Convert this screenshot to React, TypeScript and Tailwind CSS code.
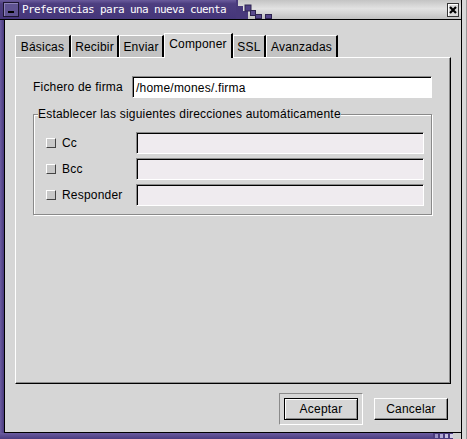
import React from "react";

const ui = "font-['Liberation_Sans',Arial,sans-serif] text-[12px] leading-[14px] tracking-[0.2px] text-black";

function Tab({ label, w, active }: { label: string; w: string; active?: boolean }) {
  if (active) {
    return (
      <div
        className={`${w} h-[25px] -mb-px relative z-10 bg-[#d6d6d6] border-l border-t border-white border-r-2 border-r-black flex justify-center pt-[3px]`}
      >
        {label}
      </div>
    );
  }
  return (
    <div
      className={`${w} h-[22px] bg-[#c3c3c3] border-l border-t border-white border-r-2 border-r-black flex justify-center pt-[4px]`}
    >
      {label}
    </div>
  );
}

function CheckRow({ label }: { label: string }) {
  return (
    <>
      <div className="flex items-center">
        <div className="w-[10px] h-[10px] bg-[#c8c8c8] border border-t-white border-l-white border-r-[#444] border-b-[#444]" />
        <span className="ml-[6px]">{label}</span>
      </div>
      <div className="h-[22px] bg-[#efebef] border border-t-[#8a8a8a] border-l-[#8a8a8a] border-b-white border-r-white shadow-[inset_1px_1px_0_#000]" />
    </>
  );
}

export default function App() {
  return (
    <div className={`w-[467px] h-[439px] flex overflow-hidden ${ui}`}>
      <div className="flex-1 flex flex-col">
        {/* Title bar */}
        <div className="h-[20px] flex border-b border-black shrink-0">
          <div className="w-[236px] flex items-center bg-[linear-gradient(to_bottom,#6a5b9c,#4d3e80_20%,#45367a)]">
            <div className="ml-[3px] w-[16px] h-[15px] border border-[#1c1530] bg-[#5f5392] shadow-[inset_1px_1px_0_#8d82b8] flex items-center justify-center pt-[5px]">
              <div className="w-[6px] h-[2px] bg-black" />
            </div>
            <span className="ml-[3px] text-white font-['DejaVu_Sans_Mono',monospace] text-[11px] leading-[13px] tracking-[-0.62px] whitespace-nowrap">
              Preferencias para una nueva cuenta
            </span>
          </div>
          <div className="flex-1 flex items-center bg-[linear-gradient(to_bottom,#c4c4c4,#e2e2e2_45%,#d4d4d4_70%,#c0c0c0)]">
            <svg width="40" height="19" viewBox="0 0 40 19" className="shrink-0 self-start">
              <polygon points="0,0 2,0 2,6 7,6 7,11 12,11 12,19 0,19" fill="#48397b" />
              <rect x="9" y="5" width="6" height="6" fill="#4f4084" stroke="#2e2450" strokeWidth="1" />
              <rect x="14.5" y="10.5" width="5" height="5" fill="#5a4b8e" stroke="#2e2450" strokeWidth="1" />
              <rect x="19.5" y="14.5" width="6" height="4" fill="#55468a" stroke="#2e2450" strokeWidth="1" />
              <rect x="29.5" y="14.5" width="6" height="4" fill="#55468a" stroke="#2e2450" strokeWidth="1" />
            </svg>
            <div className="flex-1" />
            <div className="mr-[2px] w-[12px] h-[14px] border border-[#333] bg-[#d9d9d9] shadow-[inset_1px_1px_0_#fff] flex items-center justify-center">
              <svg width="8" height="8" viewBox="0 0 8 8">
                <path d="M1 1 L7 7 M7 1 L1 7" stroke="#000" strokeWidth="2.2" />
              </svg>
            </div>
          </div>
        </div>

        {/* Body */}
        <div className="flex-1 flex bg-[#55468a]">
          <div className="w-[4px] bg-[linear-gradient(to_right,#6b5ca0,#4a3b7e)]" />
          <div className="flex-1 flex flex-col bg-[#d6d6d6] border-l border-b border-black pt-[13px] px-[10px]">
            {/* Tabs */}
            <div className="flex items-end h-[24px]">
              <Tab label="Básicas" w="w-[56px]" />
              <Tab label="Recibir" w="w-[48px]" />
              <Tab label="Enviar" w="w-[45px]" />
              <Tab label="Componer" w="w-[69px]" active />
              <Tab label="SSL" w="w-[33px]" />
              <Tab label="Avanzadas" w="w-[72px]" />
            </div>
            {/* Panel */}
            <div className="h-[327px] border-l border-t border-white border-r border-b border-r-black border-b-black shadow-[inset_-1px_-1px_0_#8c8c8c] pl-[17px] pt-[18px]">
              <div className="flex items-center">
                <div className="w-[99px]">Fichero de firma</div>
                <div className="w-[300px] h-[22px] bg-white border border-t-[#8a8a8a] border-l-[#8a8a8a] border-b-white border-r-white shadow-[inset_1px_1px_0_#000] flex items-center pl-[3px] pt-[1px]">
                  /home/mones/.firma
                </div>
              </div>
              <fieldset className="mt-[9px] w-[399px] border border-[#8a8a8a] shadow-[inset_1px_1px_0_#fff,1px_1px_0_#fff]">
                <legend className="ml-[4px] bg-[#d6d6d6] leading-[14px]">
                  Establecer las siguientes direcciones automáticamente
                </legend>
                <div className="grid grid-cols-[90px_288px] gap-y-[4px] items-center pl-[12px] pt-[11px] pb-[8px]">
                  <CheckRow label="Cc" />
                  <CheckRow label="Bcc" />
                  <CheckRow label="Responder" />
                </div>
              </fieldset>
            </div>
            {/* Buttons */}
            <div className="flex-1 flex justify-end items-start pt-[9px] pr-[3px]">
              <div className="w-[84px] h-[32px] border border-t-[#8a8a8a] border-l-[#8a8a8a] border-b-white border-r-white p-[4px]">
                <div className="w-[74px] h-[22px] border border-black shadow-[inset_1px_1px_0_#fff,inset_-1px_-1px_0_#8a8a8a] flex items-center justify-center">
                  Aceptar
                </div>
              </div>
              <div className="ml-[11px] mt-[5px] w-[74px] h-[22px] border border-t-white border-l-white border-r-black border-b-black shadow-[inset_-1px_-1px_0_#8a8a8a] flex items-center justify-center">
                Cancelar
              </div>
            </div>
          </div>
        </div>

        {/* Bottom border */}
        <div className="h-[6px] flex shrink-0">
          <div className="flex-1 bg-[linear-gradient(to_bottom,#6b5ca0,#4a3b7e)]" />
          <svg width="20" height="6" viewBox="0 0 20 6" className="shrink-0">
            <rect width="20" height="6" fill="#4a3b7e" />
            <rect x="2" y="1" width="3" height="4" fill="#9a90c4" />
            <rect x="7" y="1" width="3" height="4" fill="#b0a8d4" />
            <rect x="12" y="1" width="3" height="4" fill="#c4bee0" />
            <rect x="17" y="1" width="3" height="4" fill="#d4d0e8" />
          </svg>
          <div className="w-[8px] bg-[#cfcfcf]" />
        </div>
      </div>
      {/* Right border */}
      <div className="w-[6px] shrink-0 bg-[#d8d8d8] border-l border-black border-r border-r-[#9a9a9a]" />
    </div>
  );
}
